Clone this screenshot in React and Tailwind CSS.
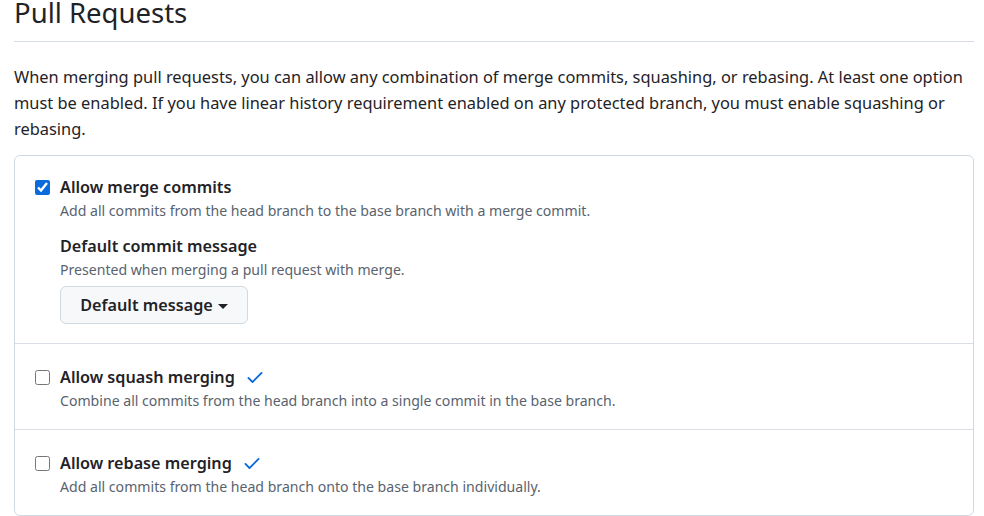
import React from 'react';

const CheckIcon = () => (
  <svg viewBox="0 0 16 16" width="20" height="20" className="fill-[#0969da] ml-[10px]">
    <path d="M13.78 4.22a.75.75 0 0 1 0 1.06l-7.25 7.25a.75.75 0 0 1-1.06 0L2.22 9.28a.751.751 0 0 1 .018-1.042.751.751 0 0 1 1.042-.018L6 10.94l6.72-6.72a.75.75 0 0 1 1.06 0Z" />
  </svg>
);

const Option = ({ label, desc, checked, verified, children, className }) => (
  <div className={`px-[20px] ${className}`}>
    <div className="flex items-center h-[26px]">
      <input
        type="checkbox"
        defaultChecked={checked}
        className="w-[15px] h-[15px] m-0 mr-[10px] accent-[#0b6bdc]"
      />
      <span className="text-[16.2px] font-semibold leading-[26px]">{label}</span>
      {verified && <CheckIcon />}
    </div>
    <p className="pl-[25px] text-[14.1px] leading-[22px] text-[#59636e]">{desc}</p>
    {children}
  </div>
);

export default function App() {
  const font = { fontFamily: '"Noto Sans", "Open Sans", sans-serif' };
  return (
    <div className="bg-white text-[#1f2328] pl-[14px] pr-[10px] h-[516px] overflow-hidden" style={font}>
      <div className="h-[42px] border-b border-[#d8dee4] flex items-end overflow-hidden">
        <h2 className="text-[27.5px] leading-[40px] font-normal relative -top-[17px] -mb-[9px]">Pull Requests</h2>
      </div>

      <p className="mt-[22px] mb-[13px] text-[16.4px] leading-[26px]">
        When merging pull requests, you can allow any combination of merge commits, squashing, or rebasing. At least one option must be enabled. If you have linear history requirement enabled on any protected branch, you must enable squashing or rebasing.
      </p>

      <div className="border border-[#d1d9e0] rounded-[6px]">
        <Option
          className="pt-[18px] pb-[19px] border-b border-[#d8dee4]"
          checked
          label="Allow merge commits"
          desc="Add all commits from the head branch to the base branch with a merge commit."
        >
          <div className="pl-[25px]">
            <h3 className="mt-[11px] text-[16.2px] font-semibold leading-[26px]">Default commit message</h3>
            <p className="text-[14.1px] leading-[22px] text-[#59636e]">Presented when merging a pull request with merge.</p>
            <button className="mt-[5px] h-[38px] w-[188px] flex items-center justify-center gap-[5px] bg-[#f6f8fa] border border-[#d1d9e0] rounded-[6px] text-[16.2px] font-semibold">
              Default message
              <svg width="10" height="5" viewBox="0 0 10 5" className="fill-[#1f2328] mt-[2px]">
                <path d="M0 0h10L5 5z" />
              </svg>
            </button>
          </div>
        </Option>
        <Option
          className="pt-[20px] pb-[17px] border-b border-[#d8dee4]"
          verified
          label="Allow squash merging"
          desc="Combine all commits from the head branch into a single commit in the base branch."
        />
        <Option
          className="pt-[20px] pb-[17px]"
          verified
          label="Allow rebase merging"
          desc="Add all commits from the head branch onto the base branch individually."
        />
      </div>
    </div>
  );
}
